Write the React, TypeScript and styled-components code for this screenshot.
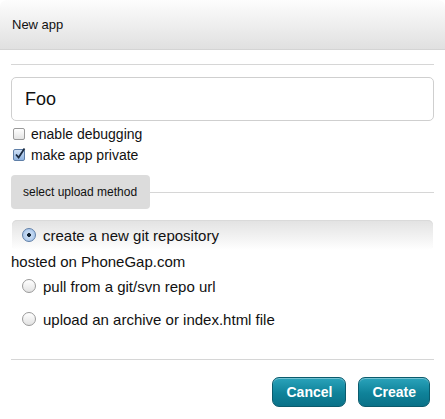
import styled, { createGlobalStyle } from 'styled-components'

const Global = createGlobalStyle`
  html, body { margin: 0; padding: 0; background: #fff; }
  body { font-family: 'Liberation Sans', Arial, sans-serif; color: #111; }
`

const Dialog = styled.div`
  width: 445px;
  height: 419px;
  background: #fff;
  border-radius: 6px 6px 0 0;
  overflow: hidden;
  display: flex;
  flex-direction: column;
`

const Header = styled.div`
  height: 50px;
  box-sizing: border-box;
  padding: 0 12px;
  display: flex;
  align-items: center;
  font-size: 13px;
  color: #111;
  background: linear-gradient(#fdfdfd, #e0e0e0);
  border-bottom: 1px solid #d4d4d4;
  border-radius: 6px 6px 0 0;
`

const Body = styled.div`
  padding: 14px 11px 0 11px;
  display: flex;
  flex-direction: column;
`

const Rule = styled.div<{ $top?: number }>`
  height: 1px;
  background: #d6d6d6;
  margin-top: ${p => p.$top ?? 0}px;
`

const NameInput = styled.input`
  margin-top: 12px;
  height: 44px;
  box-sizing: border-box;
  border: 1px solid #cfcfcf;
  border-radius: 5px;
  padding: 0 13px;
  font-family: inherit;
  font-size: 18px;
  color: #111;
  outline: none;
`

const CheckRow = styled.label<{ $top: number }>`
  display: flex;
  align-items: center;
  gap: 6px;
  margin-top: ${p => p.$top}px;
  padding-left: 2px;
  font-size: 14px;
  height: 17px;
`

const Box = styled.span<{ $on?: boolean }>`
  width: 10px;
  height: 10px;
  border: 1px solid #9a9a9a;
  border-radius: 2px;
  background: ${p => (p.$on ? 'linear-gradient(#cfe0f5, #8fb3e0)' : 'linear-gradient(#fff, #e4e4e4)')};
  border-color: ${p => (p.$on ? '#5f7fa8' : '#9a9a9a')};
  position: relative;
  flex: none;
`

const Tick = styled.svg`
  position: absolute;
  left: 0;
  top: -3px;
`

const SectionRow = styled.div`
  display: flex;
  align-items: center;
  margin-top: 12px;
`

const SectionTab = styled.div`
  width: 139px;
  height: 34px;
  box-sizing: border-box;
  background: #dcdcdc;
  border-radius: 4px;
  display: flex;
  align-items: center;
  padding-left: 12px;
  font-size: 12px;
  color: #111;
  flex: none;
`

const SectionLine = styled.div`
  flex: 1;
  height: 1px;
  background: #d6d6d6;
`

const OptionRow = styled.label<{ $active?: boolean; $top: number }>`
  display: flex;
  align-items: center;
  gap: 7px;
  height: 30px;
  margin-top: ${p => p.$top}px;
  margin-left: 1px;
  margin-right: 1px;
  padding-left: 10px;
  font-size: 15px;
  border-radius: 5px;
  background: ${p => (p.$active ? 'linear-gradient(#e2e2e2, #f6f6f6 70%, #fff)' : 'transparent')};
  box-shadow: ${p => (p.$active ? 'inset 0 1px 0 #dadada' : 'none')};
`

const Radio = styled.span<{ $on?: boolean }>`
  width: 12px;
  height: 12px;
  border-radius: 50%;
  border: 1px solid ${p => (p.$on ? '#5f7fa8' : '#9a9a9a')};
  background: ${p => (p.$on ? 'radial-gradient(circle, #123 0 1.6px, #c7dbf3 2.2px, #9cbde6)' : 'linear-gradient(#fff, #e2e2e2)')};
  flex: none;
`

const Note = styled.div`
  font-size: 15px;
  margin-top: 1px;
  height: 20px;
  display: flex;
  align-items: center;
`

const Footer = styled.div`
  display: flex;
  justify-content: flex-end;
  gap: 12px;
  margin-top: 17px;
  padding-right: 4px;
`

const Button = styled.button`
  height: 30px;
  box-sizing: border-box;
  padding: 0 13px;
  border-radius: 7px;
  border: 1px solid #0b5b6d;
  background: linear-gradient(#2aa3bb, #0f8299 55%, #0a7289);
  box-shadow: inset 0 1px 0 rgba(255, 255, 255, 0.35);
  color: #fff;
  font-family: inherit;
  font-weight: bold;
  font-size: 14px;
  cursor: pointer;
`

export default function App() {
  return (
    <>
      <Global />
      <Dialog>
        <Header>New app</Header>
        <Body>
          <Rule />
          <NameInput defaultValue='Foo' />
          <CheckRow $top={4}>
            <Box />
            enable debugging
          </CheckRow>
          <CheckRow $top={4}>
            <Box $on>
              <Tick width='12' height='13' viewBox='0 0 12 13'>
                <path d='M2 7.5 L4.6 10.5 L10.5 1.5' fill='none' stroke='#1a2a40' strokeWidth='1.8' />
              </Tick>
            </Box>
            make app private
          </CheckRow>
          <SectionRow>
            <SectionTab>select upload method</SectionTab>
            <SectionLine />
          </SectionRow>
          <OptionRow $active $top={11}>
            <Radio $on />
            create a new git repository
          </OptionRow>
          <Note>hosted on PhoneGap.com</Note>
          <OptionRow $top={0}>
            <Radio />
            pull from a git/svn repo url
          </OptionRow>
          <OptionRow $top={3}>
            <Radio />
            upload an archive or index.html file
          </OptionRow>
          <Rule $top={25} />
          <Footer>
            <Button>Cancel</Button>
            <Button>Create</Button>
          </Footer>
        </Body>
      </Dialog>
    </>
  )
}
